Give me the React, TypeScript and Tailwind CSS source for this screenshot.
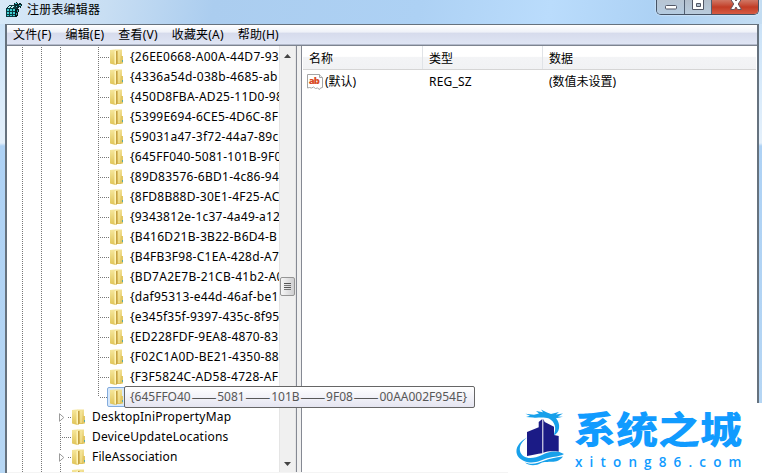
import React from "react";

const keys: [string, string][] = [
  ["{26EE0668-A00A-44D7-93", "tracking-[0.28px]"],
  ["{4336a54d-038b-4685-ab", "tracking-[0.3px]"],
  ["{450D8FBA-AD25-11D0-98", "tracking-[0.26px]"],
  ["{5399E694-6CE5-4D6C-8F", "tracking-[0.28px]"],
  ["{59031a47-3f72-44a7-89c", "tracking-[0.26px]"],
  ["{645FF040-5081-101B-9F0", "tracking-[0.26px]"],
  ["{89D83576-6BD1-4c86-94", "tracking-[0.26px]"],
  ["{8FD8B88D-30E1-4F25-AC", "tracking-[0.24px]"],
  ["{9343812e-1c37-4a49-a12", "tracking-[0.22px]"],
  ["{B416D21B-3B22-B6D4-B", "tracking-[0.28px]"],
  ["{B4FB3F98-C1EA-428d-A7", "tracking-[0.28px]"],
  ["{BD7A2E7B-21CB-41b2-A0", "tracking-[0.3px]"],
  ["{daf95313-e44d-46af-be1", "tracking-[0.28px]"],
  ["{e345f35f-9397-435c-8f95", "tracking-[0.22px]"],
  ["{ED228FDF-9EA8-4870-83", "tracking-[0.26px]"],
  ["{F02C1A0D-BE21-4350-88", "tracking-[0.26px]"],
  ["{F3F5824C-AD58-4728-AF", "tracking-[0.28px]"],
];

const dotsV = "bg-[repeating-linear-gradient(180deg,#777_0_1px,transparent_1px_2px)]";
const dotsH = "bg-[repeating-linear-gradient(90deg,#777_0_1px,transparent_1px_2px)]";

function Folder() {
  return (
    <svg className="shrink-0" width="14" height="16" viewBox="0 0 14 16">
      <defs>
        <linearGradient id="fa" x1="0" x2="0" y1="0" y2="1">
          <stop offset="0" stopColor="#f6e79c" />
          <stop offset="1" stopColor="#e0c458" />
        </linearGradient>
        <linearGradient id="fb" x1="0" x2="0" y1="0" y2="1">
          <stop offset="0" stopColor="#f3e193" />
          <stop offset="1" stopColor="#dfc25a" />
        </linearGradient>
      </defs>
      <path d="M5 .5h7V14l-1 1H5z" fill="url(#fb)" />
      <path d="M11 7h2v7.500h-2z" fill="#e2c762" />
      <path d="M12 11h1v2h-1z" fill="#58a9a8" />
      <path d="M0 1 4.500.5 7 1.500V15.500L4.500 15.800 0 14.500z" fill="url(#fa)" />
      <path d="M4.500 2 6 1.500v13.500l-1.500-.5z" fill="#fff5b8" />
      <path d="M6 2h1.500v12.500L6 15.500z" fill="#c5a141" />
      <path d="M8.500 1.500h1v12.500h-1z" fill="#f8e9a2" />
    </svg>
  );
}

function Gutter() {
  return (
    <>
      <i className={`ml-[15px] h-5 w-px shrink-0 ${dotsV}`} />
      <i className={`ml-[18px] h-5 w-px shrink-0 ${dotsV}`} />
      <i className={`ml-[18px] h-5 w-px shrink-0 ${dotsV}`} />
    </>
  );
}

function DeepRow({ label, track, last }: { label: string; track: string; last?: boolean }) {
  return (
    <div className="flex h-5 shrink-0 items-center">
      <Gutter />
      <i className={`ml-[37px] w-px shrink-0 ${last ? "h-[10px] self-start" : "h-5"} ${dotsV}`} />
      <i className={`ml-px h-px w-[9px] shrink-0 ${dotsH}`} />
      <span className={last ? "-ml-[2px] flex h-5 w-[20px] shrink-0 items-center rounded-[2px] border border-[#84acdd] bg-[#d7e8fa] pl-[2px]" : "ml-px flex w-[20px] shrink-0"}>
        <Folder />
      </span>
      {label && <span className={`whitespace-nowrap ${track}`}>{label}</span>}
    </div>
  );
}

function ParentRow({ label, expandable, track }: { label: string; expandable?: boolean; track: string }) {
  return (
    <div className="flex h-5 shrink-0 items-center">
      <i className={`ml-[15px] h-5 w-px shrink-0 ${dotsV}`} />
      <i className={`ml-[18px] h-5 w-px shrink-0 ${dotsV}`} />
      {expandable ? (
        <span className="ml-[17px] flex h-5 w-[9px] shrink-0 flex-col items-start justify-between">
          <i className={`ml-px h-[4px] w-px ${dotsV}`} />
          <svg width="6" height="9" viewBox="0 0 6 9"><path d="M.5.7v7.600L4.800 4.500z" fill="#fff" stroke="#9b9b9b" /></svg>
          <i className={`ml-px h-[4px] w-px ${dotsV}`} />
        </span>
      ) : (
        <i className={`ml-[18px] mr-[1px] h-5 w-px shrink-0 ${dotsV}`} />
      )}
      <i className={`h-px shrink-0 ${expandable ? "w-[3px]" : "w-[9px]"} ${dotsH}`} />
      <span className="ml-px flex w-[20px] shrink-0"><Folder /></span>
      <span className={`whitespace-nowrap ${track}`}>{label}</span>
    </div>
  );
}

function AppIcon() {
  return (
    <svg width="16" height="16" viewBox="0 0 16 16" shapeRendering="crispEdges">
      <path d="M0 6l3-3h7v2h1v8l-2 2H0z" fill="#0a3a40" />
      <path d="M1 7h2v2H1zM4 7h2v2H4zM7 7h2v2H7zM1 10h2v2H1zM4 10h2v2H4zM7 10h2v2H7zM1 13h2v1H1zM4 13h2v1H4zM7 13h2v1H7z" fill="#3fd0d4" />
      <path d="M3 4h2v1H3zM6 4h2v1H6zM2 5h2v1H2zM5 5h2v1H5z" fill="#bdf2f1" />
      <path d="M8 1l3-1 1 2 2-1 2 2-1 3-2-1-1 2-2-1-1-2z" fill="#07272b" />
      <path d="M9 1h2v1H9zM13 3h2v1h-2zM10 4h1v1h-1z" fill="#47c9cd" />
      <path d="M9 7h4l-1 7-3 1z" fill="#06181b" />
      <path d="M11 8h1v2h-1zM10 11h1v2h-1z" fill="#2aa1a6" />
    </svg>
  );
}

function StringIcon() {
  return (
    <svg width="16" height="16" viewBox="0 0 16 16">
      <path d="M.5.5h12l3 3v10l-2 .5-1 1.500-2-1.500-2 .5-2-1.500-2 1-2-.5-2 .5z" fill="#fff" stroke="#a5a5a5" />
      <path d="M12.500.500v3h3" fill="#eee" stroke="#a5a5a5" />
      <text x="1.800" y="10.300" fontFamily="'Open Sans', sans-serif" fontSize="9.500" fontWeight="800" fill="#d84a25" textLength="11">ab</text>
    </svg>
  );
}

function WindowButtons() {
  return (
    <div className="mr-[3px] flex h-[15px] w-[103px] overflow-hidden rounded-b-[5px] border border-t-0 border-[#465365] shadow-[0_0_2px_#fff]">
      <span className="flex w-[28px] justify-center border-r border-[#526073] bg-linear-to-b from-[#b8c5d3] to-[#b4cbe0]">
        <svg width="28" height="14"><rect x="8.500" y="5.500" width="11" height="3.500" rx="1" fill="#fff" stroke="#525765" /></svg>
      </span>
      <span className="flex w-[27px] justify-center border-r border-[#526073] bg-linear-to-b from-[#b2becb] to-[#b9ccdd]">
        <svg width="26" height="14"><path d="M7.500-1h11V9.500h-11zM11.500 3.500h4v3h-4z" fill="#fff" fillRule="evenodd" stroke="#525765" /></svg>
      </span>
      <span className="flex flex-1 justify-center bg-linear-to-b from-[#d07765] via-[#c23c25] to-[#d65b43]">
        <svg width="46" height="14"><path d="M18.500-1h4l1.500 2 1.500-2h4l-3.300 5 3.300 5.500h-4L24 7l-1.500 2.500h-4L21.700 4z" fill="#fff" stroke="#68545c" /></svg>
      </span>
    </div>
  );
}

function Brand() {
  return (
    <div className="absolute left-[508px] top-[403px] flex h-[70px] w-[254px] bg-white">
      <svg className="ml-[8px] mt-[5px] shrink-0" width="50" height="60" viewBox="0 0 50 60">
        <path d="M9.500 5.800 18 6.800 23 5.500 20 3l7 1.300-2-2.800 6 3L35 6l8-2-3 2.500 7-1-5 3 5 .3-7 1.500C45 16 44 25 37.500 27.500 41 20 39 14 33 10.500 26 8.500 21 10.500 17 9.500L10 9l4-1.200z" fill="#17a0ea" />
        <path d="M11 24 22.700 19.300V14L26.300 11V45.300C21 45.500 17 47.500 11 48z" fill="#1b1b86" />
        <path d="M27.300 11 28.700 14 38 18.700V27l4.700 1V43.700C37 43 32 43 27.300 44.700z" fill="#1b1b86" />
        <path d="M12 29C-1 35-4 48 8 53c10 4 17-1 24-3s11-1 16-4c-7-4-15-3-22 1-10 5-20 4-22-4-1-5 2-10 8-14z" fill="#17a0ea" />
        <path d="M9 54.500C22 59 27 50 47 48.500 41 57 31 52 25 55c-5 3-12 3-16-.5z" fill="#17a0ea" />
      </svg>
      <div className="ml-[9px] flex flex-col whitespace-nowrap text-[#119bff]">
        <span className="-ml-px mt-[7px] h-[40px] origin-top scale-y-[0.88] font-['Noto_Sans_CJK_SC',sans-serif] text-[42px] font-black leading-[42px]">系统之城</span>
        <span className="mt-[4px] font-['Open_Sans',sans-serif] text-[13.500px] font-semibold leading-[16px] tracking-[7.150px]">xitong86.com</span>
      </div>
    </div>
  );
}

function Dash() {
  return (
    <span className="flex w-[26.500px] shrink-0 justify-center font-['Noto_Sans_CJK_SC',sans-serif] text-[15px] leading-[18px] tracking-normal">——</span>
  );
}

export default function App() {
  return (
    <div className="relative flex h-[473px] w-[762px] flex-col overflow-hidden bg-[linear-gradient(180deg,#c5dff6_0,#d9ebfb_90px,#e4f0fb_143px,#aed2f5_146px,#b7d7f4_473px)] font-['Noto_Sans','Noto_Sans_CJK_SC',sans-serif] text-[12px] text-black">
      <header className="flex h-6 shrink-0 items-start justify-between bg-[linear-gradient(100deg,#d7e9f8_0,#c8def3_14%,#abcdef_28%,#add1f4_55%,#badcfc_72%,#acd1f4_86%,#c4ddf2_100%)]">
        <div className="flex items-center pl-[6px] pt-[2px]">
          <AppIcon />
          <span className="ml-[5px] leading-4 tracking-[0.2px]">注册表编辑器</span>
        </div>
        <WindowButtons />
      </header>
      <main className="mx-[5px] mr-[3px] flex min-h-0 flex-1 flex-col border-x-2 border-t border-[#66727e] bg-white">
        <nav className="flex h-[20px] shrink-0 items-center gap-[14px] border-b border-[#b3bacb] bg-[linear-gradient(180deg,#fff_0,#eef1f8_38%,#d6dbec_42%,#dfe5f4_100%)] pl-[6px] leading-[18px] tracking-[0.2px]">
          <span>文件(F)</span><span>编辑(E)</span><span>查看(V)</span><span>收藏夹(A)</span><span>帮助(H)</span>
        </nav>
        <div className="flex min-h-0 flex-1 border-t border-b border-t-[#7d8490] border-b-[#f4f4f4]">
          <section className="flex w-[272px] shrink-0 flex-col overflow-hidden pt-px leading-5">
            {keys.map(([label, track]) => <DeepRow key={label} label={label} track={track} />)}
            <DeepRow label="" track="" last />
            <ParentRow label="DesktopIniPropertyMap" expandable track="tracking-[0.2px]" />
            <ParentRow label="DeviceUpdateLocations" track="tracking-[0.2px]" />
            <ParentRow label="FileAssociation" expandable track="tracking-[0.15px]" />
            <ParentRow label="FileExts" track="pt-[1px] tracking-[0.15px]" />
          </section>
          <div className="flex w-[17px] shrink-0 flex-col items-center border-x border-[#e5e5e5] bg-[#f0f0f0]">
            <svg className="mt-[8px] shrink-0" width="7" height="4"><path d="M0 4 3.500 0 7 4z" fill="#444" /></svg>
            <div className="mt-[219px] flex h-[19px] w-[15px] shrink-0 flex-col items-center justify-center gap-px rounded-[2px] border border-[#959595] bg-linear-to-r from-[#f7f7f7] to-[#cfcfd1]">
              <i className="h-px w-[7px] bg-[#555]" /><i className="h-px w-[7px] bg-[#777]" /><i className="h-px w-[7px] bg-[#555]" /><i className="h-px w-[7px] bg-[#777]" />
            </div>
            <svg className="mt-auto mb-[6px] shrink-0" width="7" height="4"><path d="M0 0h7L3.500 4z" fill="#444" /></svg>
          </div>
          <div className="w-[6px] shrink-0 border-x border-[#858993] bg-[#f0f0f0]" />
          <section className="flex min-w-0 flex-1 flex-col pl-px pr-px">
            <div className="flex h-[24px] shrink-0 items-center border-b border-[#d5d5d5] bg-[linear-gradient(180deg,#fff_0,#fff_45%,#f3f4f6_50%,#f1f2f4_100%)]">
              <span className="flex h-full w-[120px] items-center border-r border-[#e0e3e7] pl-[6px] pt-[2px]">名称</span>
              <span className="flex h-full w-[120px] items-center border-r border-[#e0e3e7] pl-[6px] pt-[2px]">类型</span>
              <span className="pl-[6px] pt-[2px]">数据</span>
            </div>
            <div className="flex h-[24px] items-center">
              <span className="flex w-[126px] items-center pl-[4px]"><StringIcon /><span className="ml-[2px]">(默认)</span></span>
              <span className="w-[120px] tracking-[0.2px]">REG_SZ</span>
              <span>(数值未设置)</span>
            </div>
          </section>
        </div>
      </main>
      <div className="absolute left-[124px] top-[386px] flex h-[22px] w-[351px] items-center whitespace-nowrap rounded-[2px] border border-[#666] bg-linear-to-b from-white to-[#e5e5f1] pl-[5px] text-[#575757]">
        <span>{"{645FFO40"}</span><Dash /><span>5081</span><Dash /><span>101B</span><Dash /><span>9F08</span><Dash /><span>{"00AA002F954E}"}</span>
      </div>
      <Brand />
    </div>
  );
}
